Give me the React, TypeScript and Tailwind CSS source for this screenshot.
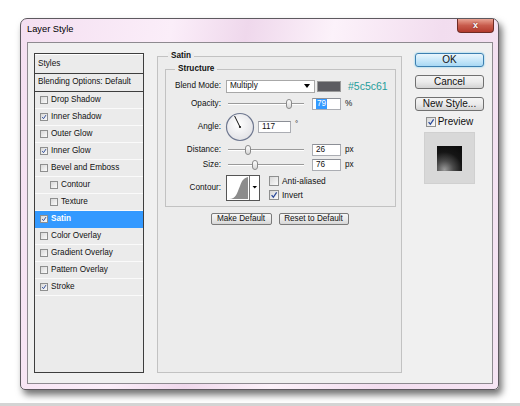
import React from "react";

type Row = { label: string; on?: boolean; indent?: boolean; active?: boolean };

const rows: Row[] = [
  { label: "Drop Shadow" },
  { label: "Inner Shadow", on: true },
  { label: "Outer Glow" },
  { label: "Inner Glow", on: true },
  { label: "Bevel and Emboss" },
  { label: "Contour", indent: true },
  { label: "Texture", indent: true },
  { label: "Satin", on: true, active: true },
  { label: "Color Overlay" },
  { label: "Gradient Overlay" },
  { label: "Pattern Overlay" },
  { label: "Stroke", on: true },
];

function Check({ on, big }: { on?: boolean; big?: boolean }) {
  return (
    <span
      className={
        (big ? "w-[10px] h-[10px] " : "w-[8px] h-[8px] ") +
        "inline-flex shrink-0 items-center justify-center border border-[#8e8f8f] bg-gradient-to-br from-[#d8d8d8] to-[#fbfbfb]"
      }
    >
      {on && (
        <svg viewBox="0 0 10 10" className="w-full h-full">
          <path d="M2 5.2 L4.2 7.8 L8.3 1.8" fill="none" stroke="#2b4a9a" strokeWidth="1.6" />
        </svg>
      )}
    </span>
  );
}

function Slider({ thumb }: { thumb: string }) {
  return (
    <div className="relative w-[76px] h-[12px] flex items-center">
      <div className="w-full h-[2px] border-t border-[#9a9a9a] bg-white" />
      <div
        className={
          "absolute top-[1px] w-[6px] h-[10px] rounded-[3px] border border-[#8a8a8a] bg-gradient-to-b from-white to-[#d6d6d6] " +
          thumb
        }
      />
    </div>
  );
}

function Field({ value, w, selected }: { value: string; w: string; selected?: boolean }) {
  return (
    <div
      className={
        "h-[12px] flex items-center pl-[3px] border border-[#abadb3] border-t-[#8c8f96] bg-white text-[8.2px] leading-none " +
        w
      }
    >
      {selected ? <span className="bg-[#3399ff] text-white px-[1px] py-[1px]">{value}</span> : value}
    </div>
  );
}

function SmallButton({ children, w }: { children: React.ReactNode; w: string }) {
  return (
    <div
      className={
        "h-[12px] flex items-center justify-center rounded-[2px] border border-[#7a7a7a] bg-gradient-to-b from-[#f6f6f6] via-[#ebebeb] to-[#d6d6d6] text-[8.2px] leading-none " +
        w
      }
    >
      {children}
    </div>
  );
}

function BigButton({ children, primary }: { children: React.ReactNode; primary?: boolean }) {
  return (
    <div
      className={
        "w-[69px] h-[14px] flex items-center justify-center rounded-[3px] border text-[10px] leading-none " +
        (primary
          ? "border-[#3c7fb1] bg-gradient-to-b from-[#eaf6fd] via-[#c9e8fa] to-[#a8d8f4] shadow-[0_0_2px_#5fc8f0]"
          : "border-[#707070] bg-gradient-to-b from-[#f4f4f4] via-[#ebebeb] to-[#d4d4d4]")
      }
    >
      {children}
    </div>
  );
}

function Label({ children }: { children: React.ReactNode }) {
  return <div className="w-[56px] shrink-0 text-right pr-[1px] text-[8.2px] leading-none">{children}</div>;
}

export default function App() {
  return (
    <div className="w-[520px] h-[406px] bg-white flex flex-col overflow-hidden font-['Liberation_Sans',Arial,sans-serif] text-[#111]">
      <div className="flex-1 pt-[18px] pl-[20px]">
        {/* dialog frame */}
        <div className="w-[479px] h-[372px] flex flex-col rounded-t-[7px] rounded-b-[5px] border border-[#5d595f] bg-[linear-gradient(100deg,#f4dff1_0%,#fbeef9_28%,#efd8ec_42%,#fcf2fa_58%,#f2ddef_78%,#f6e5f4_100%)] shadow-[3px_5px_7px_rgba(0,0,0,0.55)]">
          {/* title bar */}
          <div className="h-[23px] flex items-start justify-between pl-[6px] pr-[4px]">
            <div className="pt-[6px] text-[9.3px] leading-none text-black">Layer Style</div>
            <div className="w-[37px] h-[14px] flex items-center justify-center rounded-b-[4px] border border-t-0 border-[#6e2b25] bg-gradient-to-b from-[#e9a394] via-[#c85b4c] to-[#b33a2d] text-white font-bold text-[9px] leading-none [text-shadow:0_0_2px_#5a1510]">
              x
            </div>
          </div>

          {/* client area */}
          <div className="h-[342px] ml-[6px] mr-[5px] border border-[#8e8a90] bg-[#f0f0f0] flex items-start pl-[6px] pt-[10px]">
            {/* styles list */}
            <div className="w-[110px] h-[320px] flex flex-col border border-[#3e3e3e] bg-[#ebebeb] text-[8.2px] leading-none">
              <div className="h-[19px] flex items-center pl-[3px] border-t border-white">Styles</div>
              <div className="h-[19px] flex items-center pl-[3px] border-y border-[#3e3e3e]">Blending Options: Default</div>
              {rows.map((r) => (
                <div
                  key={r.label}
                  className={
                    "h-[17px] flex items-center gap-[3px] border-b " +
                    (r.indent ? "pl-[15px] " : "pl-[5px] ") +
                    (r.active ? "bg-[#3399ff] text-white font-bold border-[#3399ff]" : "border-[#fafafa]")
                  }
                >
                  <Check on={r.on} />
                  {r.label}
                </div>
              ))}
            </div>

            {/* satin panel */}
            <div className="ml-[13px] mt-[3px] w-[245px] h-[317px] relative border border-[#c2c2c2] bg-[#ececec] flex flex-col">
              <div className="absolute -top-[5px] left-[10px] px-[3px] bg-[#ececec] text-[8.2px] font-bold leading-none">Satin</div>

              {/* structure group */}
              <div className="mt-[12px] ml-[7px] w-[231px] h-[138px] relative border border-[#c2c2c2] flex flex-col">
                <div className="absolute -top-[5px] left-[9px] px-[3px] bg-[#ececec] text-[8.2px] font-bold leading-none">Structure</div>

                <div className="mt-[9px] h-[14px] flex items-center gap-[4px]">
                  <Label>Blend Mode:</Label>
                  <div className="w-[89px] h-[13px] flex items-center justify-between pl-[3px] pr-[4px] border border-[#a8a8a8] bg-white text-[8.2px] leading-none">
                    Multiply
                    <svg viewBox="0 0 6 4" className="w-[6px] h-[4px]">
                      <path d="M0 0 H6 L3 4 Z" fill="#000" />
                    </svg>
                  </div>
                  <div className="ml-[-2px] w-[24px] h-[11px] border border-[#9a9a9a] bg-[#5c5c61]" />
                  <div className="ml-[3px] text-[10.5px] leading-none text-[#1f9d9b]">#5c5c61</div>
                </div>

                <div className="mt-[5px] h-[12px] flex items-center gap-[6px]">
                  <Label>Opacity:</Label>
                  <Slider thumb="left-[58px]" />
                  <div className="ml-[2px]">
                    <Field value="79" w="w-[29px]" selected />
                  </div>
                  <span className="-ml-[2px] text-[8.2px] leading-none">%</span>
                </div>

                <div className="mt-[2px] h-[30px] flex items-center gap-[3px]">
                  <Label>Angle:</Label>
                  <svg viewBox="0 0 30 30" className="w-[30px] h-[30px]">
                    <defs>
                      <radialGradient id="dial" cx="0.45" cy="0.4" r="0.6">
                        <stop offset="0" stopColor="#ffffff" />
                        <stop offset="1" stopColor="#e2e2e6" />
                      </radialGradient>
                    </defs>
                    <circle cx="15" cy="15" r="13.5" fill="url(#dial)" stroke="#6f7890" strokeWidth="1.2" />
                    <line x1="15" y1="15" x2="9.6" y2="4" stroke="#111" strokeWidth="1" />
                    <circle cx="15" cy="15" r="1.1" fill="#111" />
                  </svg>
                  <Field value="117" w="w-[33px]" />
                  <span className="ml-[1px] -mt-[6px] text-[8px] leading-none">°</span>
                </div>

                <div className="mt-[2px] h-[12px] flex items-center gap-[6px]">
                  <Label>Distance:</Label>
                  <Slider thumb="left-[17px]" />
                  <div className="ml-[2px]">
                    <Field value="26" w="w-[29px]" />
                  </div>
                  <span className="-ml-[2px] text-[8.2px] leading-none">px</span>
                </div>

                <div className="mt-[3px] h-[12px] flex items-center gap-[6px]">
                  <Label>Size:</Label>
                  <Slider thumb="left-[24px]" />
                  <div className="ml-[2px]">
                    <Field value="76" w="w-[29px]" />
                  </div>
                  <span className="-ml-[2px] text-[8.2px] leading-none">px</span>
                </div>

                <div className="mt-[4px] h-[26px] flex items-center gap-[4px]">
                  <Label>Contour:</Label>
                  <svg viewBox="0 0 34 26" className="w-[34px] h-[26px]">
                    <rect x="0.5" y="0.5" width="33" height="25" fill="#fff" stroke="#555" />
                    <path d="M3 24 C10 24 11 18 14 11 C16 5 18 3 22 2 L22 24 Z" fill="#8c8c8c" />
                    <line x1="23.5" y1="1" x2="23.5" y2="25" stroke="#777" />
                    <path d="M26.5 11 H31 L28.75 13.5 Z" fill="#000" />
                  </svg>
                  <div className="ml-[5px] flex flex-col gap-[4px] text-[8.4px] leading-none">
                    <div className="flex items-center gap-[3px]">
                      <Check big />
                      Anti-aliased
                    </div>
                    <div className="flex items-center gap-[3px]">
                      <Check big on />
                      Invert
                    </div>
                  </div>
                </div>
              </div>

              <div className="mt-[6px] flex justify-center gap-[7px]">
                <SmallButton w="w-[61px]">Make Default</SmallButton>
                <SmallButton w="w-[70px]">Reset to Default</SmallButton>
              </div>
            </div>

            {/* right column */}
            <div className="ml-[13px] flex flex-col items-center gap-[8px]">
              <BigButton primary>OK</BigButton>
              <BigButton>Cancel</BigButton>
              <BigButton>New Style...</BigButton>
              <div className="-mt-[2px] flex items-center gap-[2px] text-[10px] leading-none">
                <Check big on />
                Preview
              </div>
              <div className="-mt-[3px] w-[51px] h-[52px] flex items-center justify-center border border-[#d0d0d0] bg-[#d8d8d8]">
                <div className="w-[25px] h-[25px] bg-[radial-gradient(circle_at_30%_95%,#9a9a9a_0%,#4a4a4a_30%,#151515_60%,#0a0a0a_100%)]" />
              </div>
            </div>
          </div>
        </div>
      </div>
      <div className="h-[3px] bg-[#d4d4d4]" />
    </div>
  );
}
